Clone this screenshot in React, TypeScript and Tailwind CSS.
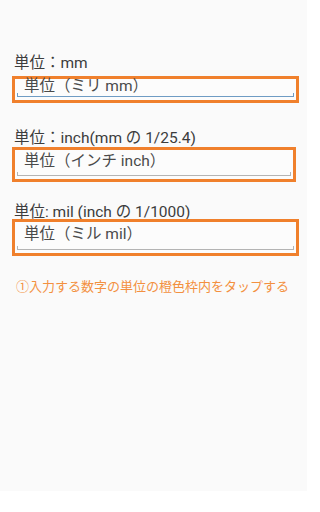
import React from "react";

const font = { fontFamily: 'Roboto, "Noto Sans CJK JP", sans-serif' };

function UnitBox({ text, h, w, focused }: { text: string; h: string; w: string; focused?: boolean }) {
  const line = focused ? "border-[#6f9cc4]" : "border-[#b4b4b4]";
  const tick = focused ? "bg-[#6f9cc4]" : "bg-[#b4b4b4]";
  return (
    <div className={`ml-[12px] ${w} ${h} border-[3px] border-[#f0802c] bg-[#fcfcfc] px-[2px] pb-[3px] flex`}>
      <div className={`relative flex-1 flex items-center border-b-[1.5px] ${line}`}>
        <span className="pl-[7px] text-[15.5px] leading-none text-[#4a4a4a] -mt-[1px]">{text}</span>
        <span className={`absolute left-0 bottom-0 w-[1px] h-[3px] ${tick}`} />
        <span className={`absolute right-0 bottom-0 w-[1px] h-[3px] ${tick}`} />
      </div>
    </div>
  );
}

export default function App() {
  return (
    <div style={font} className="w-[307px] h-[512px] bg-white">
      <div className="h-[491px] bg-[#fafafa] flex flex-col">
        <div className="mt-[55px] pl-[14px] text-[15.5px] leading-[16px] text-[#3c3c3c]">単位：mm</div>
        <div className="mt-[5px]">
          <UnitBox text="単位（ミリ mm）" h="h-[27px]" w="w-[287px]" focused />
        </div>
        <div className="mt-[27px] pl-[14px] text-[15.5px] leading-[16px] text-[#3c3c3c]">単位：inch(mm の 1/25.4)</div>
        <div className="mt-[1px]">
          <UnitBox text="単位（インチ inch）" h="h-[35px]" w="w-[284px]" />
        </div>
        <div className="mt-[23px] pl-[14px] text-[15.5px] leading-[14px] text-[#3c3c3c]">単位: mil (inch の 1/1000)</div>
        <div>
          <UnitBox text="単位（ミル mil）" h="h-[37px]" w="w-[287px]" />
        </div>
        <div className="mt-[23px] pl-[16px] text-[13px] leading-[16px] text-[#f39040]">
          ①入力する数字の単位の橙色枠内をタップする
        </div>
      </div>
    </div>
  );
}
